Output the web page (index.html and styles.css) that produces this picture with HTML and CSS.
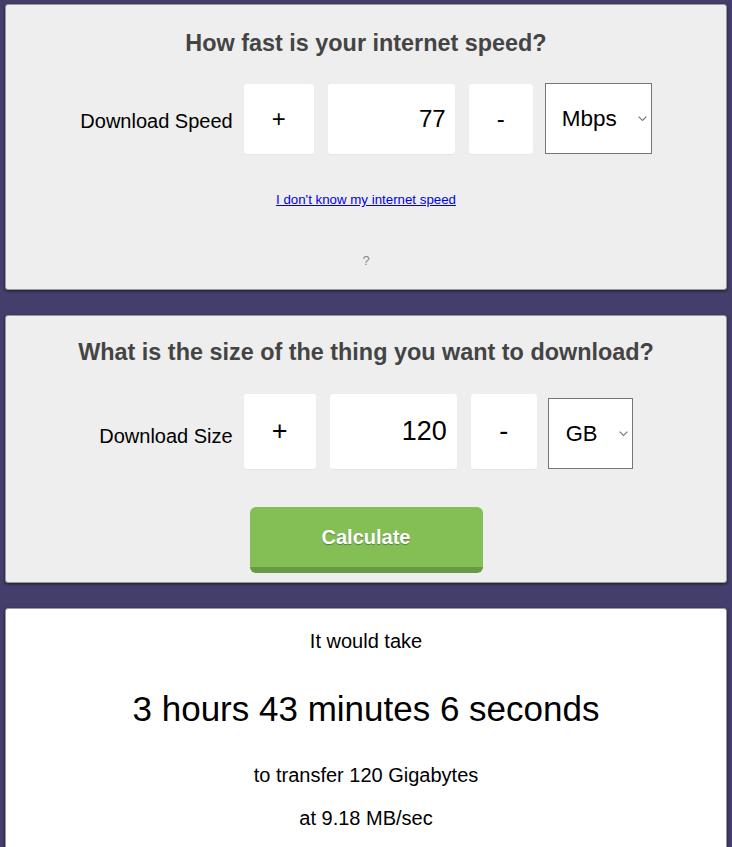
FILE: index.html
```html
<!DOCTYPE html>
<html lang="en">
<head>
<meta charset="utf-8">
<title>Download Time Calculator</title>
<link rel="stylesheet" href="styles.css">
</head>
<body>
<main class="page">
  <section class="card card-speed">
    <h2 class="card-title">How fast is your internet speed?</h2>
    <div class="field-row row-speed">
      <label class="field-label" for="speed">Download Speed</label>
      <button class="step step-plus" type="button">+</button>
      <input class="num-input" id="speed" type="text" value="77">
      <button class="step step-minus" type="button">-</button>
      <div class="unit-select">
        <select class="unit-native">
          <option>Mbps</option>
          <option>Kbps</option>
          <option>Gbps</option>
        </select>
        <svg class="chev" width="9" height="5" viewBox="0 0 9 5"><polyline points="0.6,0.6 4.5,4.4 8.4,0.6" fill="none" stroke="#777" stroke-width="1.2"/></svg>
      </div>
    </div>
    <p class="help-link"><a href="#">I don't know my internet speed</a></p>
    <p class="qmark">?</p>
  </section>

  <section class="card card-size">
    <h2 class="card-title">What is the size of the thing you want to download?</h2>
    <div class="field-row row-size">
      <label class="field-label" for="size">Download Size</label>
      <button class="step step-plus" type="button">+</button>
      <input class="num-input" id="size" type="text" value="120">
      <button class="step step-minus" type="button">-</button>
      <div class="unit-select">
        <select class="unit-native">
          <option>GB</option>
          <option>MB</option>
          <option>TB</option>
        </select>
        <svg class="chev" width="9" height="5" viewBox="0 0 9 5"><polyline points="0.6,0.6 4.5,4.4 8.4,0.6" fill="none" stroke="#777" stroke-width="1.2"/></svg>
      </div>
    </div>
    <div class="btn-wrap">
      <button class="calc-btn" type="button">Calculate</button>
    </div>
  </section>

  <section class="card card-result">
    <p class="res-line res-first">It would take</p>
    <p class="res-big">3 hours 43 minutes 6 seconds</p>
    <p class="res-line res-transfer">to transfer 120 Gigabytes</p>
    <p class="res-line res-rate">at 9.18 MB/sec</p>
  </section>
</main>
</body>
</html>
```

FILE: styles.css
```css
html, body {
  margin: 0;
  padding: 0;
}
body {
  background: #433e6b;
  font-family: "Liberation Sans", Arial, sans-serif;
  color: #000;
}
.page {
  display: flex;
  flex-direction: column;
  gap: 25px;
  padding: 4px 5px 0;
}
.card {
  background: #eeeeee;
  border: 1px solid #9a9a9a;
  border-radius: 3px;
  box-shadow: 0 1px 3px rgba(0, 0, 0, 0.6);
  display: flex;
  flex-direction: column;
  align-items: center;
}
.card-title {
  margin: 0;
  font-size: 23.4px;
  line-height: 28px;
  font-weight: bold;
  color: #444;
  text-align: center;
}
.card-speed {
  padding: 24px 0 20px;
}
.card-size {
  padding: 22px 0 9px;
}
.card-result {
  background: #fff;
  padding: 20px 0 30px;
}
.field-row {
  display: flex;
  justify-content: center;
  width: 100%;
}
.row-speed {
  margin-top: 26px;
  align-items: center;
  height: 71px;
}
.row-size {
  margin-top: 28px;
  align-items: flex-end;
  height: 75px;
}
.field-label {
  font-size: 20px;
  line-height: 24px;
  margin-right: 11px;
  align-self: flex-start;
}
.row-speed .field-label { margin-top: 26px; }
.row-size .field-label { margin-top: 30px; }
.step, .num-input {
  background: #fff;
  border: none;
  border-radius: 3px;
  box-shadow: 0 1px 1px rgba(0, 0, 0, 0.04);
  font-family: "Liberation Sans", Arial, sans-serif;
  color: #000;
  padding: 0;
  margin: 0;
}
.step {
  text-align: center;
}
.num-input {
  text-align: right;
  padding-right: 9px;
  box-sizing: border-box;
  outline: none;
}
.row-speed .step, .row-speed .num-input {
  height: 70px;
  font-size: 24px;
}
.row-speed .step-plus { width: 70px; }
.row-speed .num-input { width: 127px; margin-left: 14px; font-size: 24px; }
.row-speed .step-minus { width: 64px; margin-left: 14px; }
.row-speed .unit-select { width: 107px; height: 71px; margin-left: 12px; }
.row-speed .unit-native { font-size: 22.5px; padding-left: 16px; }

.row-size .step, .row-size .num-input {
  height: 75px;
  font-size: 27px;
}
.row-size .step-plus { width: 72px; }
.row-size .num-input { width: 127px; margin-left: 14px; font-size: 27px; padding-right: 10px; }
.row-size .step-minus { width: 66px; margin-left: 14px; }
.row-size .unit-select { width: 85px; height: 71px; margin-left: 11px; }
.row-size .unit-native { font-size: 22px; padding-left: 17px; }

.unit-select {
  box-sizing: border-box;
  background: #fff;
  border: 1px solid #767676;
  display: flex;
  align-items: center;
}
.unit-native {
  -webkit-appearance: none;
  appearance: none;
  border: none;
  background: transparent;
  font-family: "Liberation Sans", Arial, sans-serif;
  color: #000;
  flex: 1;
  min-width: 0;
  height: 100%;
  margin: 0;
  padding-top: 0;
  padding-bottom: 0;
  padding-right: 0;
  outline: none;
}
.chev {
  flex: none;
  margin-right: 4px;
}
.help-link {
  margin: 38px 0 0;
  font-size: 13.3px;
  line-height: 16px;
}
.help-link a {
  color: #0000ee;
  text-decoration: underline;
}
.qmark {
  margin: 45px 0 0;
  font-size: 13px;
  line-height: 16px;
  color: #888;
}
.btn-wrap {
  margin-top: 38px;
  display: flex;
  justify-content: center;
}
.calc-btn {
  width: 233px;
  height: 66px;
  box-sizing: border-box;
  background: #84bf56;
  border: none;
  border-bottom: 6px solid #6a9945;
  border-radius: 6px;
  color: #fff;
  font-family: "Liberation Sans", Arial, sans-serif;
  font-size: 20px;
  font-weight: bold;
  text-shadow: 0 1px 1px rgba(0, 0, 0, 0.35);
  padding: 0;
}
.res-line {
  margin: 0;
  font-size: 20px;
  line-height: 24px;
  text-align: center;
}
.res-big {
  margin: 36px 0 0;
  font-size: 35px;
  line-height: 40px;
  text-align: center;
}
.res-transfer {
  margin-top: 34px;
}
.res-rate {
  margin-top: 19px;
}
```
